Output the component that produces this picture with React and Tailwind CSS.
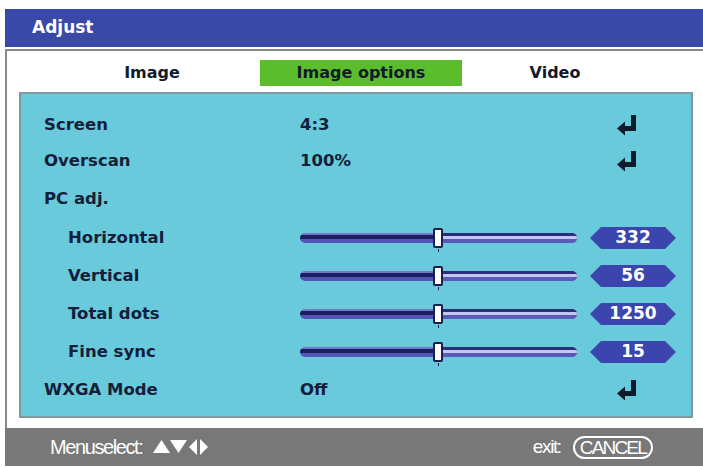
import React from 'react';

const font = { fontFamily: '"DejaVu Sans", "Liberation Sans", sans-serif' };

const EnterIcon = () => (
  <svg width="24" height="22" viewBox="0 0 24 22" className="block">
    <path d="M16 1 H21 V17 H9 V12 H16 Z" fill="#0f1a2c" />
    <path d="M10 7.5 L2 14.5 L10 21.5 Z" fill="#0f1a2c" />
  </svg>
);

const Slider = ({ pos }) => (
  <div className="relative w-[277px] h-[10px]">
    <div className="absolute inset-0 rounded-full bg-[linear-gradient(to_bottom,#7676cc_0%,#7676cc_20%,#1b1f62_20%,#1b1f62_60%,#5454b4_60%,#5454b4_100%)]" />
    <div
      className="absolute top-0 bottom-0 right-0 rounded-r-full bg-[linear-gradient(to_bottom,#2a2f78_0%,#2a2f78_30%,#c4c6f2_30%,#c4c6f2_60%,#5a5ab8_60%,#5a5ab8_100%)]"
      style={{ left: pos + 4 }}
    />
    <div
      className="absolute top-[-5px] w-[10px] h-[20px] bg-white border-2 border-[#1b1f50] rounded-[2px]"
      style={{ left: pos - 4 }}
    />
    <div className="absolute top-[16px] w-[1px] h-[3px] bg-[#1b1f50]" style={{ left: pos + 1 }} />
  </div>
);

const Badge = ({ value }) => (
  <div className="w-[86px] h-[22px] bg-[#3b45ad] flex items-center justify-center text-white font-bold text-[17px] [clip-path:polygon(11px_0,calc(100%-11px)_0,100%_50%,calc(100%-11px)_100%,11px_100%,0_50%)]">
    {value}
  </div>
);

const rows = [
  { label: 'Screen', value: '4:3', enter: true, h: 'h-[36px]' },
  { label: 'Overscan', value: '100%', enter: true, h: 'h-[36px]' },
  { label: 'PC adj.', h: 'h-[40px]' },
  { label: 'Horizontal', indent: true, slider: '332', h: 'h-[38px]' },
  { label: 'Vertical', indent: true, slider: '56', h: 'h-[38px]' },
  { label: 'Total dots', indent: true, slider: '1250', h: 'h-[38px]' },
  { label: 'Fine sync', indent: true, slider: '15', h: 'h-[38px]' },
  { label: 'WXGA Mode', value: 'Off', enter: true, h: 'h-[38px]' },
];

export default function App() {
  return (
    <div className="w-[703px] h-[468px] bg-white pt-[9px] pl-[5px] overflow-hidden" style={font}>
      <div className="h-[38px] bg-[#3a48a8] flex items-center pl-[27px] text-white font-bold text-[17px]">
        Adjust
      </div>
      <div className="mt-[2px] h-[379px] border-t-2 border-l-2 border-[#8a8a8a] bg-white">
        <div className="flex mt-[9px] ml-[44px] h-[26px] items-center text-[16px] font-bold text-[#111a2a]">
          <div className="w-[202px] text-center">Image</div>
          <div className="w-[202px] ml-[7px] h-full bg-[#5cbd2c] flex items-center justify-center">
            Image options
          </div>
          <div className="w-[186px] text-center">Video</div>
        </div>
        <div className="mt-[6px] ml-[12px] w-[674px] h-[326px] bg-[#68cadb] border-2 border-[#7f9aa0] pt-[13px] text-[16.5px] font-bold text-[#14203a]">
          {rows.map((r) => (
            <div key={r.label} className={`flex items-center ${r.h}`}>
              <div className={r.indent ? 'w-[279px] pl-[47px]' : 'w-[279px] pl-[23px]'}>{r.label}</div>
              {r.slider ? (
                <>
                  <Slider pos={137} />
                  <div className="ml-[13px]">
                    <Badge value={r.slider} />
                  </div>
                </>
              ) : (
                <>
                  <div className="w-[315px]">{r.value}</div>
                  {r.enter && <EnterIcon />}
                </>
              )}
            </div>
          ))}
        </div>
      </div>
      <div className="h-[38px] bg-[#787878] flex items-center text-white" style={{ fontFamily: '"Liberation Sans", sans-serif' }}>
        <div className="ml-[45px] flex items-center text-[20px] tracking-[-1.4px]">
          <span>Menuselect:</span>
          <svg width="60" height="20" viewBox="0 0 60 20" className="ml-[10px]">
            <path d="M1 16 L9.5 3 L18 16 Z" fill="white" />
            <path d="M18 3 L35 3 L26.5 16 Z" fill="white" />
            <path d="M45 2 L45 18 L37 10 Z" fill="white" />
            <path d="M48 2 L48 18 L56 10 Z" fill="white" />
          </svg>
        </div>
        <div className="ml-auto mr-[50px] flex items-center text-[19px]">
          <span className="tracking-[-1.4px]">exit:</span>
          <span className="ml-[12px] h-[23px] px-[5px] border-2 border-white rounded-full flex items-center text-[19px] tracking-[-1.8px] leading-none">
            CANCEL
          </span>
        </div>
      </div>
    </div>
  );
}
